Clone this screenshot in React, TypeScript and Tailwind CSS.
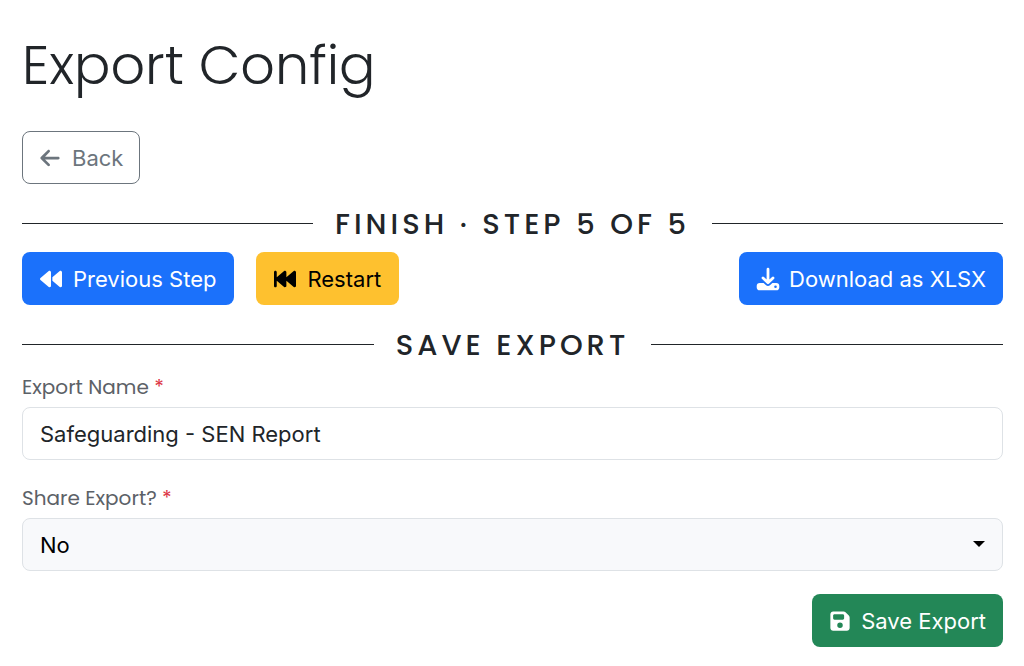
import type { ReactNode } from "react";
import { FaArrowLeft, FaBackward, FaBackwardFast, FaFloppyDisk } from "react-icons/fa6";

function DownloadIcon() {
  return (
    <svg viewBox="0 0 24 24" className="size-6" aria-hidden="true">
      <path
        fillRule="evenodd"
        fill="currentColor"
        d="M3.800 16h3.800l2.200 2a3.200 3.200 0 0 0 4.400 0l2.200-2h3.800a3.100 3.100 0 0 1 3.100 3.100v1.100a3.100 3.100 0 0 1-3.100 3.100H3.800a3.100 3.100 0 0 1-3.100-3.100v-1.100A3.100 3.100 0 0 1 3.800 16Zm15.700 2.400a1.300 1.300 0 1 0 0 2.600 1.300 1.300 0 0 0 0-2.600Z"
      />
      <path
        d="M12 2.200v13.400M7 11l5 4.700L17 11"
        fill="none"
        stroke="currentColor"
        strokeWidth="2.800"
        strokeLinecap="round"
        strokeLinejoin="round"
      />
    </svg>
  );
}

function SectionHeading({ children }: { children: ReactNode }) {
  return (
    <div className="flex items-center gap-[22px]">
      <span className="h-px flex-1 bg-[#212529]" />
      <h2 className="pt-[2px] text-[29px] leading-8 font-medium tracking-[4px] whitespace-nowrap uppercase font-['Poppins','Inter',sans-serif]">
        {children}
      </h2>
      <span className="h-px flex-1 bg-[#212529]" />
    </div>
  );
}

const button = "flex h-[53px] items-center rounded-lg text-[22px] leading-8 whitespace-nowrap";
const label = "block text-[20px] leading-7 text-[#5c6167] font-['Poppins','Inter',sans-serif]";

export default function App() {
  return (
    <main className="bg-white pt-[30px] pr-[21px] pb-5 pl-[22px] font-['Inter','Liberation_Sans',sans-serif] text-[#212529]">
      <h1 className="text-[54px] leading-[70px] font-light font-['Poppins','Inter',sans-serif]">Export Config</h1>
      <div className="mt-[31px] flex">
        <button type="button" className={`${button} gap-[11px] border border-[#6c757d] px-4 text-[#6c757d]`}>
          <FaArrowLeft className="size-[22px]" />
          Back
        </button>
      </div>

      <section className="mt-[22px]">
        <SectionHeading>Finish · Step 5 of 5</SectionHeading>
        <div className="mt-3 flex flex-wrap gap-[22px]">
          <button type="button" className={`${button} gap-[11px] bg-[#1b71fb] px-[18px] text-white`}>
            <FaBackward className="size-[22px]" />
            Previous Step
          </button>
          <button type="button" className={`${button} gap-[11px] bg-[#fec12f] px-[18px] text-black`}>
            <FaBackwardFast className="size-[22px]" />
            Restart
          </button>
          <button type="button" className={`${button} ml-auto gap-[9px] bg-[#1b71fb] px-[17px] text-white`}>
            <DownloadIcon />
            Download as XLSX
          </button>
        </div>
      </section>

      <form className="mt-[22px]" onSubmit={(event) => event.preventDefault()}>
        <SectionHeading>Save Export</SectionHeading>
        <label htmlFor="export-name" className={`${label} mt-3`}>
          Export Name <span className="text-[#dc3545]">*</span>
        </label>
        <input
          id="export-name"
          type="text"
          defaultValue="Safeguarding - SEN Report"
          className="mt-[6px] block h-[53px] w-full rounded-lg border border-[#dee2e6] bg-white px-[17px] text-[22px]"
        />
        <label htmlFor="share-export" className={`${label} mt-6`}>
          Share Export? <span className="text-[#dc3545]">*</span>
        </label>
        <div className="relative mt-[6px]">
          <select
            id="share-export"
            defaultValue="No"
            className="block h-[53px] w-full appearance-none rounded-lg border border-[#dee2e6] bg-[#f8f9fb] px-[17px] pt-[2px] text-[22px] text-black"
          >
            <option>No</option>
            <option>Yes</option>
          </select>
          <svg
            viewBox="0 0 12 6"
            className="pointer-events-none absolute top-[23px] right-[18px] h-[6px] w-3"
            aria-hidden="true"
          >
            <path d="M0 0h12L6 6Z" fill="black" />
          </svg>
        </div>
        <div className="mt-[23px] flex justify-end">
          <button type="submit" className={`${button} gap-[10px] bg-[#238757] px-[17px] text-white`}>
            <FaFloppyDisk className="size-[22px]" />
            Save Export
          </button>
        </div>
      </form>
    </main>
  );
}
